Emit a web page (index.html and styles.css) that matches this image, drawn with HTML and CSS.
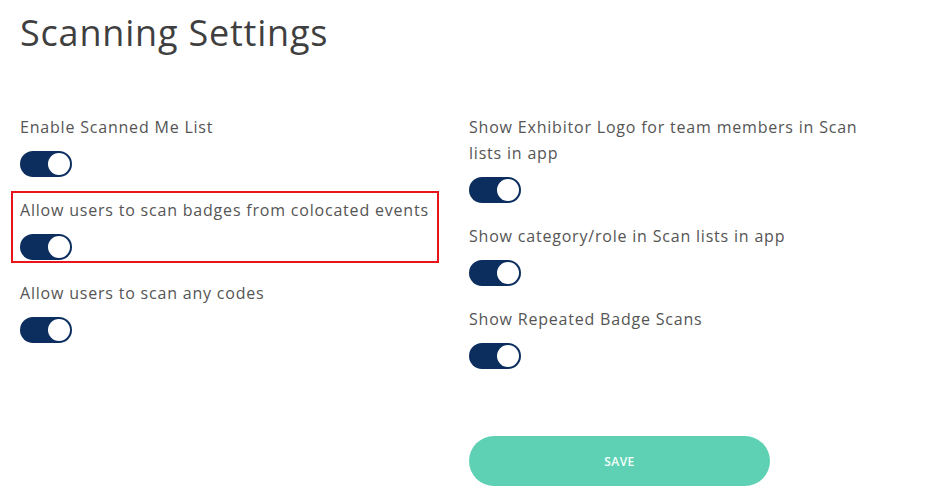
FILE: index.html
```html
<!DOCTYPE html>
<html>
<head>
<meta charset="utf-8">
<link rel="stylesheet" href="styles.css">
</head>
<body>
<div class="page">
  <h1 class="title">Scanning Settings</h1>
  <div class="grid">
    <div class="col col-left">
      <div class="item">
        <div class="label">Enable Scanned Me List</div>
        <span class="toggle"><span class="knob"></span></span>
      </div>
      <div class="item highlighted">
        <div class="label">Allow users to scan badges from colocated events</div>
        <span class="toggle"><span class="knob"></span></span>
      </div>
      <div class="item">
        <div class="label">Allow users to scan any codes</div>
        <span class="toggle"><span class="knob"></span></span>
      </div>
    </div>
    <div class="col col-right">
      <div class="item">
        <div class="label">Show Exhibitor Logo for team members in Scan lists in app</div>
        <span class="toggle"><span class="knob"></span></span>
      </div>
      <div class="item">
        <div class="label">Show category/role in Scan lists in app</div>
        <span class="toggle"><span class="knob"></span></span>
      </div>
      <div class="item">
        <div class="label">Show Repeated Badge Scans</div>
        <span class="toggle"><span class="knob"></span></span>
      </div>
      <button class="save">SAVE</button>
    </div>
  </div>
</div>
</body>
</html>
```

FILE: styles.css
```css
html, body {
  margin: 0;
  padding: 0;
  background: #ffffff;
}
body {
  font-family: "Open Sans", "Noto Sans", sans-serif;
  color: #555555;
}
.page {
  padding: 8px 0 0 20px;
}
.title {
  margin: 0;
  font-size: 36px;
  font-weight: 400;
  line-height: 49px;
  letter-spacing: 0.8px;
  color: #3f3f3f;
}
.grid {
  display: grid;
  grid-template-columns: 449px 410px;
  margin-top: 57px;
}
.col {
  display: flex;
  flex-direction: column;
}
.item {
  display: flex;
  flex-direction: column;
  align-items: flex-start;
  padding-bottom: 20px;
  position: relative;
}
.label {
  font-size: 16px;
  line-height: 26px;
  letter-spacing: 0.8px;
  color: #555555;
  margin-bottom: 11px;
}
.toggle {
  display: inline-block;
  width: 52px;
  height: 26px;
  border-radius: 13px;
  background: #0b2e5f;
  position: relative;
}
.knob {
  position: absolute;
  right: 2px;
  top: 2px;
  width: 22px;
  height: 22px;
  border-radius: 50%;
  background: #ffffff;
}
.highlighted::after {
  content: "";
  position: absolute;
  left: -9px;
  top: -6px;
  width: 424px;
  height: 68px;
  border: 2px solid #e8141a;
  pointer-events: none;
}
.save {
  margin-top: 47px;
  width: 301px;
  height: 50px;
  border: none;
  border-radius: 25px;
  background: #5ed1b4;
  color: #f4fffa;
  font-family: "Open Sans", "Noto Sans", sans-serif;
  font-size: 12px;
  font-weight: 600;
  letter-spacing: 0.4px;
  padding: 0;
}
```
